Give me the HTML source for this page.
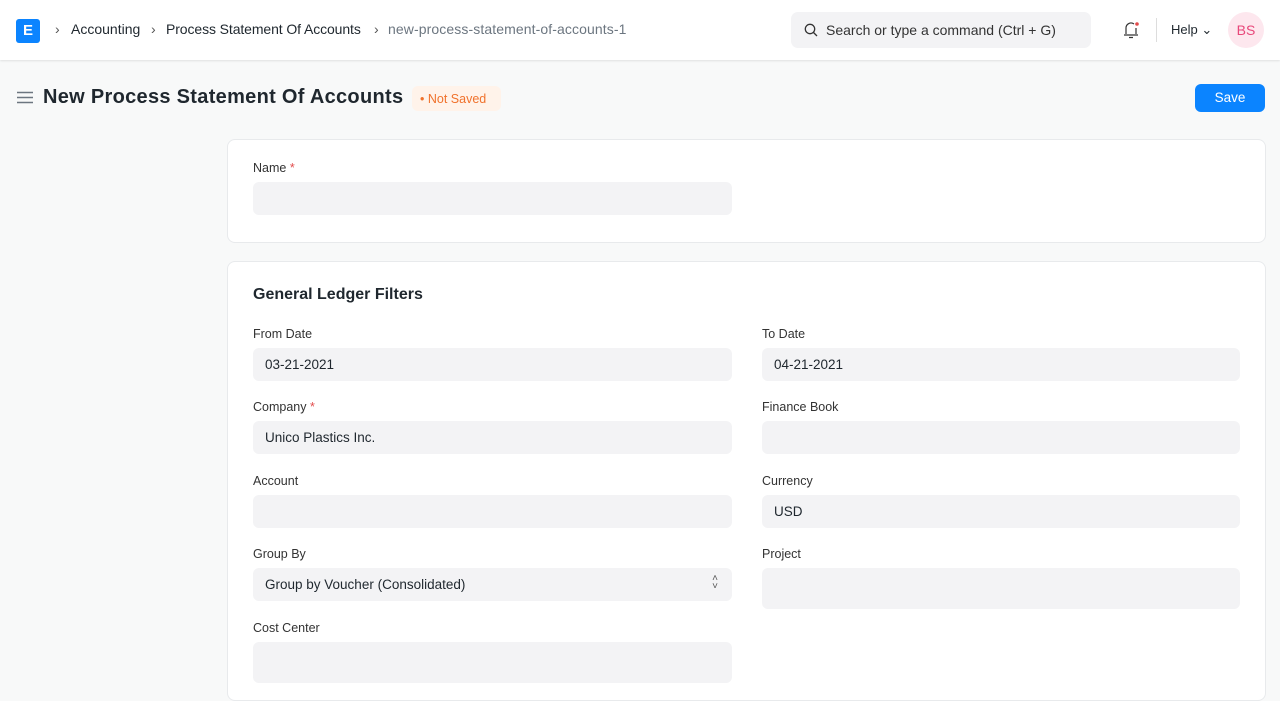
<!DOCTYPE html><html><head><style>
*{box-sizing:border-box;margin:0;padding:0}
body{width:1280px;height:689px;overflow:hidden;background:#f8f9f9;font-family:"Liberation Sans",sans-serif;color:#1f272e;font-size:13px}
.nav{position:absolute;top:0;left:0;width:1280px;height:60px;background:#fff;box-shadow:0 1px 2px rgba(0,0,0,.1)}
.logo{position:absolute;left:16px;top:19px;width:24px;height:24px;background:#0b84ff;border-radius:3px;color:#fff;font-weight:bold;font-size:15px;text-align:center;line-height:24px}
.bc{position:absolute;top:21px;font-size:14px}
.search{position:absolute;left:791px;top:12px;width:300px;height:36px;background:#f3f3f5;border-radius:7px;font-size:14px;color:#333;padding:10px 0 0 35px}
.av{position:absolute;left:1228px;top:12px;width:36px;height:36px;border-radius:50%;background:#fde7ee;color:#e8477a;font-size:14px;text-align:center;line-height:36px}
.card{position:absolute;left:227px;width:1039px;background:#fff;border:1px solid #e8eaec;border-radius:8px}
.lbl{position:absolute;font-size:12.5px;color:#333}
.lbl b{color:#e24c4c;font-weight:normal}
.in{position:absolute;width:479px;height:33px;background:#f3f3f5;border-radius:6px;font-size:13.5px;padding:9px 12px;color:#1f272e}
</style></head><body>
<div class="nav">
<div class="logo">E</div>
<div class="bc" style="left:55px;color:#555">›</div>
<div class="bc" style="left:71px">Accounting</div>
<div class="bc" style="left:151px;color:#555">›</div>
<div class="bc" style="left:166px;letter-spacing:-0.1px">Process Statement Of Accounts</div>
<div class="bc" style="left:374px;color:#555">›</div>
<div class="bc" style="left:388px;color:#6c7680;letter-spacing:0.1px">new-process-statement-of-accounts-1</div>
<div class="search"><svg style="position:absolute;left:13px;top:11px" width="14" height="14" viewBox="0 0 14 14" fill="none" stroke="#333" stroke-width="1.3"><circle cx="6" cy="6" r="4.7"/><path d="M9.5 9.5L13 13"/></svg>Search or type a command (Ctrl + G)</div>
<svg style="position:absolute;left:1122px;top:20px" width="18" height="20" viewBox="0 0 18 20" fill="none" stroke="#333" stroke-width="1.2"><path d="M4 14V8a5 5 0 0 1 8-4M14 8v6M2 15h14M7 17.5h4"/><circle cx="15" cy="4" r="1.8" fill="#e24c4c" stroke="none"/></svg>
<div style="position:absolute;left:1156px;top:18px;width:1px;height:24px;background:#ddd"></div>
<div class="bc" style="left:1171px;font-size:13px;top:22px">Help ⌄</div>
<div class="av">BS</div>
</div>
<svg style="position:absolute;left:17px;top:91px" width="16" height="13" stroke="#6c7680" stroke-width="1.5"><path d="M0 1.5h16M0 6.5h16M0 11.5h16"/></svg>
<div style="position:absolute;left:43px;top:86px;font-size:20px;font-weight:bold;letter-spacing:0.3px">New Process Statement Of Accounts</div>
<div style="position:absolute;left:412px;top:86px;width:89px;height:25px;background:#fff3ea;border-radius:6px;color:#f0722c;font-size:12.5px;padding:6px 0 0 8px">• Not Saved</div>
<div style="position:absolute;left:1195px;top:84px;width:70px;height:28px;background:#0b84ff;border-radius:6px;color:#fff;font-size:13.5px;text-align:center;line-height:28px">Save</div>
<div class="card" style="top:139px;height:104px">
<div class="lbl" style="left:25px;top:21px">Name <b>*</b></div>
<div class="in" style="left:25px;top:42px"></div>
</div>
<div class="card" style="top:261px;height:440px">
<div style="position:absolute;left:25px;top:24px;font-size:16px;font-weight:bold">General Ledger Filters</div>
<div class="lbl" style="left:25px;top:65px">From Date</div><div class="in" style="left:25px;top:86px">03-21-2021</div>
<div class="lbl" style="left:534px;top:65px">To Date</div><div class="in" style="left:534px;top:86px;width:478px">04-21-2021</div>
<div class="lbl" style="left:25px;top:138px">Company <b>*</b></div><div class="in" style="left:25px;top:159px">Unico Plastics Inc.</div>
<div class="lbl" style="left:534px;top:138px">Finance Book</div><div class="in" style="left:534px;top:159px;width:478px"></div>
<div class="lbl" style="left:25px;top:212px">Account</div><div class="in" style="left:25px;top:233px"></div>
<div class="lbl" style="left:534px;top:212px">Currency</div><div class="in" style="left:534px;top:233px;width:478px">USD</div>
<div class="lbl" style="left:25px;top:285px">Group By</div><div class="in" style="left:25px;top:306px">Group by Voucher (Consolidated)<span style="position:absolute;right:14px;top:7px;font-size:10px;line-height:8px;color:#555">˄<br>˅</span></div>
<div class="lbl" style="left:534px;top:285px">Project</div><div class="in" style="left:534px;top:306px;height:41px;width:478px"></div>
<div class="lbl" style="left:25px;top:359px">Cost Center</div><div class="in" style="left:25px;top:380px;height:41px"></div>
</div>
</body></html>
